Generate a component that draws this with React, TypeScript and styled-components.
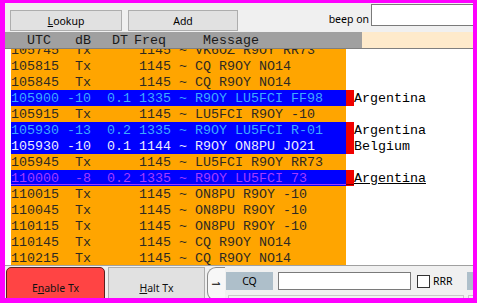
import React from 'react';
import styled, { createGlobalStyle } from 'styled-components';

const Global = createGlobalStyle`
  html, body { margin: 0; padding: 0; background: #ffffff; }
  body { width: 477px; height: 303px; overflow: hidden; }
`;

const MONO = `"Liberation Mono", "Courier New", monospace`;
const UI = `"Noto Sans", "Liberation Sans", sans-serif`;

const Frame = styled.div`
  width: 477px;
  height: 303px;
  box-sizing: border-box;
  border-style: solid;
  border-color: #ff00ff;
  border-width: 3px 4px 5px 5px;
  background: #f0f0f0;
  overflow: hidden;
  display: flex;
  flex-direction: column;
  font-family: ${UI};
`;

const Toolbar = styled.div`
  height: 29px;
  flex: none;
  display: flex;
  align-items: flex-start;
  padding-left: 5px;
`;

const PushButton = styled.button<{ $w: number; $ml?: number }>`
  box-sizing: border-box;
  width: ${p => p.$w}px;
  height: 21px;
  margin-top: 7px;
  margin-left: ${p => p.$ml ?? 0}px;
  border: 1px solid #adadad;
  background: #e1e1e1;
  font-family: ${UI};
  font-size: 10.5px;
  color: #000;
  padding: 0;
  display: flex;
  align-items: center;
  justify-content: center;
`;

const Spacer = styled.div`
  flex: 1;
`;

const BeepLabel = styled.span`
  margin-top: 8px;
  font-size: 10.5px;
  color: #000;
  line-height: 16px;
`;

const BeepInput = styled.div`
  box-sizing: border-box;
  width: 102px;
  height: 22px;
  margin-top: 1px;
  margin-left: 2px;
  border: 1px solid #7a7a7a;
  border-right: none;
  background: #fff;
`;

const HeaderRow = styled.div`
  height: 16px;
  flex: none;
  display: flex;
`;

const HeaderLabel = styled.div`
  width: 357px;
  box-sizing: border-box;
  padding-left: 22px;
  background: #a0a0a0;
  font-family: ${MONO};
  font-size: 13.33px;
  line-height: 17px;
  white-space: pre;
  color: #1a1a1a;
  display: flex;
  overflow: hidden;
`;

const HeaderCell = styled.span<{ $w?: number }>`
  flex: none;
  width: ${p => (p.$w ? `${p.$w}px` : 'auto')};
`;

const HeaderFill = styled.div`
  flex: 1;
  background: #feeacb;
`;

const TextArea = styled.div`
  flex: 1;
  background: #ffffff;
  border-top: 1px solid #7f7f7f;
  border-bottom: 1px solid #a0a0a0;
  overflow: hidden;
  padding-left: 6px;
`;

const Scroll = styled.div`
  margin-top: -7px;
`;

const Row = styled.div`
  display: flex;
  height: 16px;
  overflow: hidden;
  font-family: ${MONO};
  font-size: 13.33px;
  line-height: 17px;
  white-space: pre;
`;

const Block = styled.div<{ $bg: string; $fg: string; $ul?: boolean }>`
  width: 335px;
  flex: none;
  background: ${p => p.$bg};
  color: ${p => p.$fg};
  box-shadow: ${p => (p.$ul ? `inset 0 -1px 0 ${p.$bg}, inset 0 -2px 0 ${p.$fg}` : 'none')};
`;

const Marker = styled.div<{ $ul?: boolean }>`
  width: 8px;
  flex: none;
  background: #f00000;
  box-shadow: ${p => (p.$ul ? 'inset 0 -1px 0 #f00000, inset 0 -2px 0 #700000' : 'none')};
`;

const Country = styled.span<{ $ul?: boolean }>`
  color: #000;
  text-decoration: ${p => (p.$ul ? 'underline' : 'none')};
`;

const BottomPanel = styled.div`
  height: 31px;
  flex: none;
  display: flex;
  align-items: flex-start;
  padding-left: 1px;
  padding-top: 1px;
`;

const TxButton = styled.div<{ $red?: boolean; $w: number; $ml?: number }>`
  box-sizing: border-box;
  width: ${p => p.$w}px;
  height: 36px;
  margin-left: ${p => p.$ml ?? 0}px;
  flex: none;
  border: 1px solid ${p => (p.$red ? '#5a2020' : '#adadad')};
  border-radius: ${p => (p.$red ? '5px 5px 0 0' : '0')};
  background: ${p => (p.$red ? '#ff4444' : '#e1e1e1')};
  font-size: 10.5px;
  color: #111;
  display: flex;
  justify-content: center;
  padding-top: 13px;
`;

const U = styled.span`
  text-decoration: underline;
`;

const SideTab = styled.div`
  box-sizing: border-box;
  width: 18px;
  height: 34px;
  margin-left: 2px;
  flex: none;
  border: 1px solid #8a8a8a;
  border-right: none;
  border-radius: 9px 0 0 9px;
  background: #f7f7f7;
  display: flex;
  align-items: center;
  justify-content: center;
`;

const TabText = styled.span`
  transform: rotate(90deg);
  font-size: 10.5px;
  color: #000;
`;

const TabPage = styled.div`
  flex: 1;
  display: flex;
  flex-direction: column;
  padding-left: 1px;
  padding-top: 5px;
  gap: 5px;
`;

const TabLine = styled.div`
  display: flex;
  align-items: flex-start;
`;

const CqBox = styled.div<{ $w: number; $ml?: number }>`
  box-sizing: border-box;
  width: ${p => p.$w}px;
  height: 18px;
  margin-left: ${p => p.$ml ?? 0}px;
  flex: none;
  background: #aebfca;
  font-size: 10.5px;
  color: #000;
  display: flex;
  align-items: center;
  justify-content: center;
`;

const MsgInput = styled.div<{ $w: number; $ml?: number }>`
  box-sizing: border-box;
  width: ${p => p.$w}px;
  height: 18px;
  margin-left: ${p => p.$ml ?? 0}px;
  flex: none;
  border: 1px solid #7a7a7a;
  background: #fff;
`;

const Check = styled.div`
  box-sizing: border-box;
  width: 13px;
  height: 13px;
  margin-left: 6px;
  margin-top: 3px;
  flex: none;
  border: 1px solid #333;
  background: #fff;
`;

const CheckLabel = styled.span`
  margin-left: 3px;
  font-size: 10.5px;
  line-height: 18px;
  color: #000;
  width: 34px;
`;

const NextBox = styled.div<{ $w: number; $ml?: number }>`
  box-sizing: border-box;
  width: ${p => p.$w}px;
  height: 20px;
  margin-left: ${p => p.$ml ?? 0}px;
  flex: none;
  border: 1px solid #c8c8c8;
  background: #f0f0f0;
`;

type RowData = {
  text: string;
  kind: 'tx' | 'cq' | 'me' | 'new';
  country?: string;
  marker?: boolean;
  ul?: boolean;
};

const rows: RowData[] = [
  { text: '105745  Tx      1145 ~ VK6OZ R9OY RR73', kind: 'tx' },
  { text: '105815  Tx      1145 ~ CQ R9OY NO14', kind: 'tx' },
  { text: '105845  Tx      1145 ~ CQ R9OY NO14', kind: 'tx' },
  { text: '105900 -10  0.1 1335 ~ R9OY LU5FCI FF98', kind: 'cq', country: 'Argentina', marker: true },
  { text: '105915  Tx      1145 ~ LU5FCI R9OY -10', kind: 'tx' },
  { text: '105930 -13  0.2 1335 ~ R9OY LU5FCI R-01', kind: 'cq', country: 'Argentina', marker: true },
  { text: '105930 -10  0.1 1144 ~ R9OY ON8PU JO21', kind: 'me', country: 'Belgium', marker: true },
  { text: '105945  Tx      1145 ~ LU5FCI R9OY RR73', kind: 'tx' },
  { text: '110000  -8  0.2 1335 ~ R9OY LU5FCI 73', kind: 'new', country: 'Argentina', marker: true, ul: true },
  { text: '110015  Tx      1145 ~ ON8PU R9OY -10', kind: 'tx' },
  { text: '110045  Tx      1145 ~ ON8PU R9OY -10', kind: 'tx' },
  { text: '110115  Tx      1145 ~ ON8PU R9OY -10', kind: 'tx' },
  { text: '110145  Tx      1145 ~ CQ R9OY NO14', kind: 'tx' },
  { text: '110215  Tx      1145 ~ CQ R9OY NO14', kind: 'tx' },
];

const palette: Record<RowData['kind'], { bg: string; fg: string }> = {
  tx: { bg: '#ffa500', fg: '#2e2a22' },
  cq: { bg: '#0000ff', fg: '#3fa9ff' },
  me: { bg: '#0000ff', fg: '#ececff' },
  new: { bg: '#0000ff', fg: '#a23cff' },
};

const headerCells: { label: string; w?: number }[] = [
  { label: 'UTC', w: 48 },
  { label: 'dB', w: 37 },
  { label: 'DT', w: 22 },
  { label: 'Freq', w: 69 },
  { label: 'Message' },
];

export default function App() {
  return (
    <>
      <Global />
      <Frame>
        <Toolbar>
          <PushButton $w={112}>
            <U>L</U>ookup
          </PushButton>
          <PushButton $w={110} $ml={6}>Add</PushButton>
          <Spacer />
          <BeepLabel>beep on</BeepLabel>
          <BeepInput />
        </Toolbar>
        <HeaderRow>
          <HeaderLabel>
            {headerCells.map(c => (
              <HeaderCell key={c.label} $w={c.w}>
                {c.label}
              </HeaderCell>
            ))}
          </HeaderLabel>
          <HeaderFill />
        </HeaderRow>
        <TextArea>
          <Scroll>
            {rows.map((r, i) => {
              const c = palette[r.kind];
              return (
                <Row key={i}>
                  <Block $bg={c.bg} $fg={c.fg} $ul={r.ul}>
                    {r.text}
                  </Block>
                  {r.marker && <Marker $ul={r.ul} />}
                  {r.country && <Country $ul={r.ul}>{r.country}</Country>}
                </Row>
              );
            })}
          </Scroll>
        </TextArea>
        <BottomPanel>
          <TxButton $red $w={99}>
            E<U>n</U>able Tx
          </TxButton>
          <TxButton $w={97} $ml={3}>
            <U>H</U>alt Tx
          </TxButton>
          <SideTab>
            <TabText>1</TabText>
          </SideTab>
          <TabPage>
            <TabLine>
              <CqBox $w={47}>CQ</CqBox>
              <MsgInput $w={133} $ml={5} />
              <Check />
              <CheckLabel>RRR</CheckLabel>
              <CqBox $w={10} />
            </TabLine>
            <TabLine>
              <NextBox $w={236} $ml={2} />
              <NextBox $w={10} $ml={4} />
            </TabLine>
          </TabPage>
        </BottomPanel>
      </Frame>
    </>
  );
}
